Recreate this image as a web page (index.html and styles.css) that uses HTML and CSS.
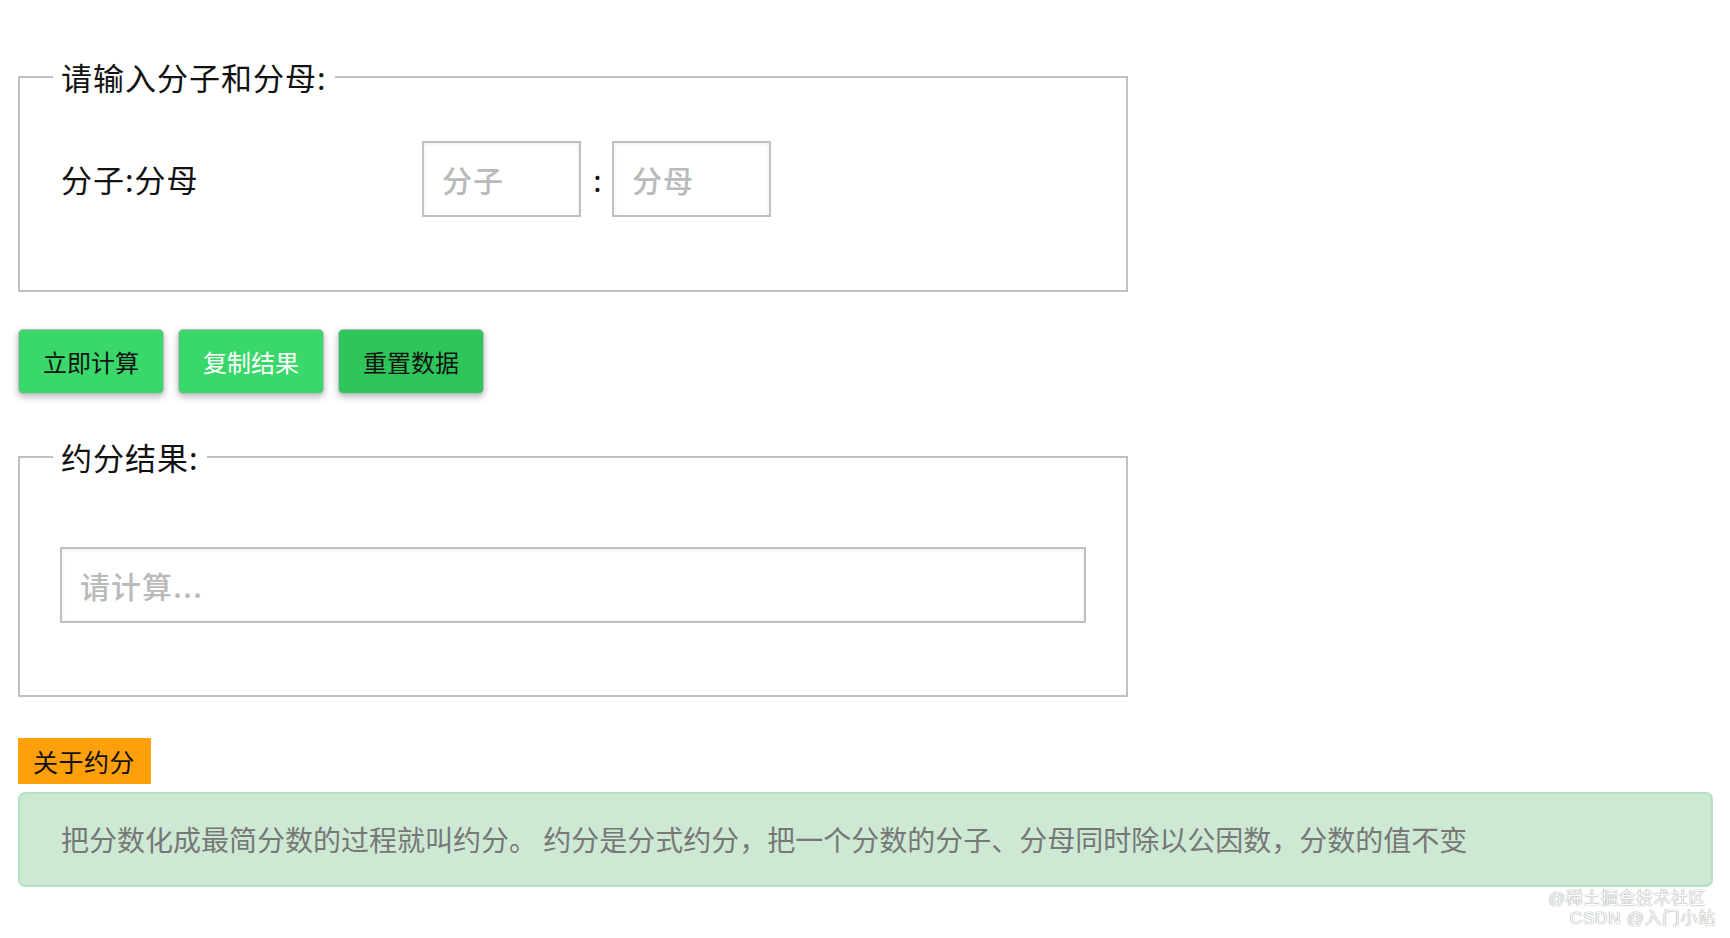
FILE: index.html
```
<!DOCTYPE html>
<html lang="zh-CN">
<head>
<meta charset="utf-8">
<title>约分计算</title>
<link rel="stylesheet" href="styles.css">
</head>
<body>
<div class="page">
  <fieldset class="box box-input">
    <legend class="box-title">请输入分子和分母:</legend>
    <div class="row">
      <label class="row-label">分子:分母</label>
      <input class="field field-num" type="text" placeholder="分子">
      <span class="colon">:</span>
      <input class="field field-num" type="text" placeholder="分母">
    </div>
  </fieldset>

  <div class="actions">
    <button class="btn btn-calc">立即计算</button>
    <button class="btn btn-copy">复制结果</button>
    <button class="btn btn-reset">重置数据</button>
  </div>

  <fieldset class="box box-result">
    <legend class="box-title">约分结果:</legend>
    <input class="field field-result" type="text" placeholder="请计算...">
  </fieldset>

  <div class="about-tag">关于约分</div>
  <div class="about">把分数化成最简分数的过程就叫约分。 约分是分式约分，把一个分数的分子、分母同时除以公因数，分数的值不变</div>
</div>
<div class="watermark">
  <div class="wm-line wm-1">@稀土掘金技术社区</div>
  <div class="wm-line wm-2">CSDN @入门小站</div>
</div>
</body>
</html>
```
FILE: styles.css
```
* { box-sizing: border-box; }
html, body {
  margin: 0;
  padding: 0;
  background: #ffffff;
}
body {
  font-family: "Noto Sans CJK SC", "Noto Sans", sans-serif;
  color: #111;
  width: 1730px;
  height: 938px;
  position: relative;
  overflow: hidden;
}
.page {
  padding: 59px 17px 0 18px;
}
.box {
  width: 1110px;
  margin: 0;
  border: 2px solid #c0c0c0;
  padding: 0 40px;
}
.box-title {
  font-size: 31px;
  line-height: 36px;
  letter-spacing: 1px;
  padding: 0 8px;
  margin-left: -7px;
  color: #111;
}
.box-input {
  padding-top: 46px;
  padding-bottom: 73px;
}
.row {
  display: flex;
  align-items: center;
  height: 76px;
}
.row-label {
  width: 362px;
  flex-shrink: 0;
  font-size: 31px;
  letter-spacing: 1px;
  line-height: 36px;
  padding-left: 1px;
}
.field {
  height: 76px;
  border: 2px solid #c0c0c0;
  box-shadow: inset 0 1px 4px rgba(0,0,0,0.08);
  font-family: "Noto Sans CJK SC", "Noto Sans", sans-serif;
  font-size: 30px;
  letter-spacing: 1px;
  padding: 0 0 0 18px;
  outline: none;
  background: #fff;
  color: #333;
  border-radius: 0;
}
.field::placeholder {
  color: #bababa;
  font-weight: 500;
}
.field-num {
  width: 159px;
}
.colon {
  width: 31px;
  text-align: center;
  font-size: 30px;
  line-height: 36px;
  padding-left: 2px;
}
.actions {
  display: flex;
  gap: 14px;
  margin-top: 37px;
}
.btn {
  height: 65px;
  padding: 0 24px;
  font-family: "Noto Sans CJK SC", "Noto Sans", sans-serif;
  font-size: 24px;
  border: 1px solid #bcbcbc;
  border-radius: 5px;
  box-shadow: 0 3px 7px rgba(0,0,0,0.28);
  background: #3ad86a;
  color: #111;
  cursor: pointer;
}
.btn-copy {
  color: #ffffff;
}
.btn-reset {
  background: #2ec65a;
}
.box-result {
  margin-top: 45px;
  padding-top: 72px;
  padding-bottom: 72px;
}
.field-result {
  display: block;
  width: 1026px;
}
.about-tag {
  display: inline-block;
  margin-top: 41px;
  height: 46px;
  line-height: 46px;
  padding: 0 16px 0 15px;
  background: #ff9f0a;
  font-size: 25px;
  letter-spacing: 0.5px;
  color: #111;
}
.about {
  margin-top: 8px;
  height: 95px;
  line-height: 91px;
  border: 2px solid #b6e1c2;
  border-radius: 7px;
  background: #cde9d4;
  padding-left: 41px;
  font-size: 28px;
  color: #777;
}
.watermark {
  position: absolute;
  right: 14px;
  top: 889px;
  text-align: right;
  font-family: "Liberation Sans", "Noto Sans CJK SC", sans-serif;
  font-size: 17px;
  line-height: 20px;
  color: #ffffff;
  text-shadow: 0 0 1px #8c8c8c, 0 0 1px #a0a0a0;
}
.wm-1 {
  padding-right: 10px;
  letter-spacing: 0.5px;
}
.wm-2 {
  letter-spacing: 0.8px;
}
```
